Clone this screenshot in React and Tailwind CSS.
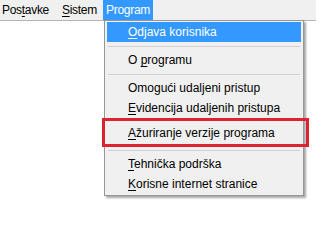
import React from "react";

const font = { fontFamily: '"Liberation Sans", Arial, sans-serif' };

function Item({ mn, pre = "", rest, active, className = "" }) {
  return (
    <div
      className={`h-[20px] flex items-center pl-[21px] mx-[2px] ${
        active ? "bg-[#3399ff] text-white" : "text-black"
      } ${className}`}
    >
      <span>
        {pre}
        {mn && <span className="underline underline-offset-[2px]">{mn}</span>}
        {rest}
      </span>
    </div>
  );
}

function Sep() {
  return (
    <div className="h-[8px] flex items-center pl-[3px] pr-[3px]">
      <div className="h-px w-full bg-[#d0d0d0]" />
    </div>
  );
}

export default function App() {
  return (
    <div className="relative w-[316px] h-[211px] bg-white overflow-hidden text-[12px] leading-none" style={font}>
      {/* MENU BAR */}
      <div className="h-[21px] bg-[#f0f0f0] border-b border-[#b4b4b4] flex items-start">
        <div className="h-[20px] w-[62px] flex items-center pl-[2px] tracking-[-0.3px]">
          Pos<span className="underline underline-offset-[2px]">t</span>avke
        </div>
        <div className="h-[20px] w-[41px] flex items-center tracking-[-0.3px]">
          <span className="underline underline-offset-[2px]">S</span>istem
        </div>
        <div className="h-[20px] w-[50px] flex items-center justify-center bg-[#3399ff] text-white tracking-[-0.3px]">
          Program
        </div>
      </div>

      {/* DROPDOWN */}
      <div className="absolute left-[104px] top-[20px] w-[200px] bg-[#f0f0f0] border border-[#979797] py-[1px] shadow-[2px_2px_2px_rgba(0,0,0,0.35)]">
        <Item mn="O" rest="djava korisnika" active />
        <Sep />
        <Item pre="O " mn="p" rest="rogramu" />
        <Sep />
        <Item rest="Omogući udaljeni pristup" />
        <Item mn="E" rest="videncija udaljenih pristupa" />
        <div className="h-[5px]" />
        <Item mn="A" rest="žuriranje verzije programa" />
        <div className="h-[11px] flex items-end pb-[3px] px-[3px]">
          <div className="h-px w-full bg-[#d0d0d0]" />
        </div>
        <Item mn="T" rest="ehnička podrška" />
        <Item mn="K" rest="orisne internet stranice" />
      </div>

      {/* ANNOTATION */}
      <div className="absolute left-[102px] top-[118px] w-[207px] h-[29px] border-[3px] border-[#dc2430]" />
    </div>
  );
}
